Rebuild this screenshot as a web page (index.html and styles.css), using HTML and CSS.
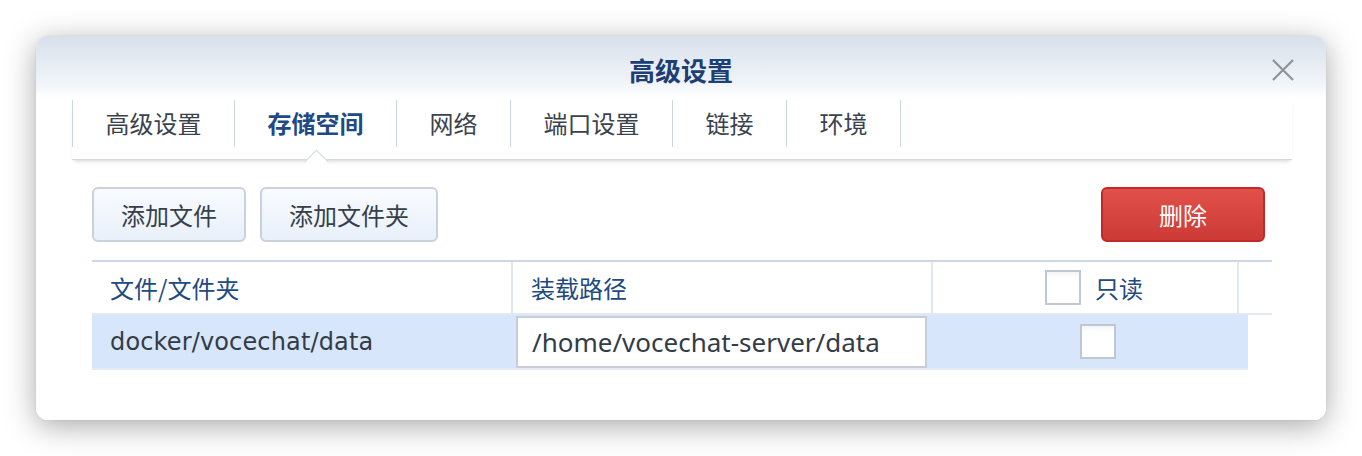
FILE: index.html
```html
<!DOCTYPE html>
<html lang="zh-CN">
<head>
<meta charset="utf-8">
<title>高级设置</title>
<link rel="stylesheet" href="styles.css">
</head>
<body>
<div class="stage">
  <div class="dialog">
    <div class="titlebar">
      <span></span>
      <h1 class="title">高级设置</h1>
      <button class="close" aria-label="关闭">
        <svg width="22" height="22" viewBox="0 0 22 22"><path d="M1 1 L21 21 M21 1 L1 21" stroke="#8d939a" stroke-width="2.2" fill="none"/></svg>
      </button>
    </div>
    <div class="tabs">
      <div class="tab">高级设置</div>
      <div class="tab active">存储空间<span class="caret"></span></div>
      <div class="tab">网络</div>
      <div class="tab">端口设置</div>
      <div class="tab">链接</div>
      <div class="tab last">环境</div>
    </div>
    <div class="content">
      <div class="toolbar">
        <button class="btn">添加文件</button>
        <button class="btn">添加文件夹</button>
        <button class="btn danger">删除</button>
      </div>
      <div class="grid">
        <div class="ghead">
          <div class="hcell">文件/文件夹</div>
          <div class="hcell">装载路径</div>
          <div class="hcell center"><span class="check"></span><span>只读</span></div>
          <div class="hcell gutter"></div>
        </div>
        <div class="grow">
          <div class="cell latin">docker/vocechat/data</div>
          <div class="cell edit"><div class="input">/home/vocechat-server/data</div></div>
          <div class="cell center"><span class="check"></span></div>
        </div>
      </div>
    </div>
  </div>
</div>
</body>
</html>
```

FILE: styles.css
```css
html, body {
  margin: 0;
  padding: 0;
  background: #ffffff;
}
body {
  font-family: "Noto Sans CJK SC", "Noto Sans", sans-serif;
  font-size: 24px;
  color: #363f49;
}
.stage {
  padding: 36px 36px 36px 36px;
}
.dialog {
  width: 1290px;
  height: 384px;
  border-radius: 12px;
  background: linear-gradient(to bottom, #d8e0eb 0px, #f1f5f9 48px, #ffffff 62px, #ffffff 100%);
  box-shadow: 0 6px 30px rgba(0, 0, 0, 0.34), 0 0 2px rgba(0,0,0,0.08);
  overflow: hidden;
}
.titlebar {
  height: 64px;
  display: grid;
  grid-template-columns: 1fr auto 1fr;
  align-items: center;
}
.title {
  margin: 0;
  font-size: 26px;
  font-weight: 700;
  color: #1d3f74;
  line-height: 1;
  padding-top: 4px;
}
.close {
  justify-self: end;
  margin-right: 32px;
  margin-top: 4px;
  border: 0;
  background: none;
  padding: 0;
  width: 22px;
  height: 22px;
  display: flex;
}
.tabs {
  margin: 0 34px 0 36px;
  height: 59px;
  display: flex;
  align-items: flex-start;
  border-bottom: 1px solid #d4d7db;
  box-shadow: 0 3px 4px -2px rgba(0,0,0,0.18);
  position: relative;
}
.tab {
  height: 47px;
  line-height: 46px;
  padding: 0 32.5px;
  border-left: 1px solid #cbd6e4;
  color: #3a434d;
  position: relative;
  white-space: nowrap;
}
.tab.last {
  border-right: 1px solid #cbd6e4;
}
.tab.active {
  color: #1f4a83;
  font-weight: 700;
}
.caret {
  position: absolute;
  left: 50%;
  top: 53px;
  width: 16px;
  height: 16px;
  margin-left: -8px;
  background: #ffffff;
  border-left: 1px solid #d4d7db;
  border-top: 1px solid #d4d7db;
  transform: rotate(45deg);
}
.content {
  padding: 27px 54px 0 56px;
}
.toolbar {
  display: flex;
  gap: 14px;
  height: 55px;
}
.btn {
  font-family: "Noto Sans CJK SC", "Noto Sans", sans-serif;
  font-size: 24px;
  color: #363f49;
  height: 55px;
  padding: 0 27px;
  border: 2px solid #c8d1dd;
  border-radius: 6px;
  background: linear-gradient(to bottom, #f8fbff, #e9f0fa);
  line-height: 1;
}
.btn.danger {
  margin-left: auto;
  margin-right: 7px;
  width: 164px;
  padding: 0;
  color: #ffffff;
  font-weight: 400;
  border-color: #c3292b;
  background: linear-gradient(to bottom, #e2504a, #cc3a36);
}
.grid {
  margin-top: 18px;
}
.ghead {
  display: grid;
  grid-template-columns: 421px 420px 306px 33px;
  height: 51px;
  border-top: 2px solid #cdd8e6;
  border-bottom: 2px solid #e2e9f2;
}
.hcell {
  display: flex;
  align-items: center;
  padding-left: 18px;
  color: #214a80;
  border-right: 2px solid #dfe7f1;
  box-sizing: border-box;
}
.hcell.gutter {
  border-right: 0;
}
.hcell.center, .cell.center {
  justify-content: center;
  gap: 14px;
}
.hcell.center {
  padding-left: 18px;
}
.cell.center {
  padding-left: 14px;
}
.grow {
  display: grid;
  grid-template-columns: 421px 420px 315px;
  width: 1156px;
  height: 53px;
  background: #d7e6fb;
  border-bottom: 2px solid #e5ebf3;
}
.cell {
  display: flex;
  align-items: center;
  padding-left: 18px;
  box-sizing: border-box;
  color: #333c46;
}
.cell.latin {
  font-family: "DejaVu Sans", "Noto Sans", sans-serif;
  font-size: 24px;
  letter-spacing: 0.15px;
}
.cell.edit {
  padding: 1px 6px 0 3px;
  align-items: flex-start;
}
.input {
  width: 411px;
  height: 52px;
  box-sizing: border-box;
  border: 2px solid #c7ced7;
  background: #ffffff;
  padding-left: 14px;
  display: flex;
  align-items: center;
  font-family: "Noto Sans", sans-serif;
  font-size: 26px;
  color: #333c46;
}
.check {
  display: inline-block;
  width: 36px;
  height: 35px;
  box-sizing: border-box;
  border: 2px solid #bec7d2;
  background: linear-gradient(to bottom, #f3f5f8, #ffffff 6px);
  flex: none;
}
```
